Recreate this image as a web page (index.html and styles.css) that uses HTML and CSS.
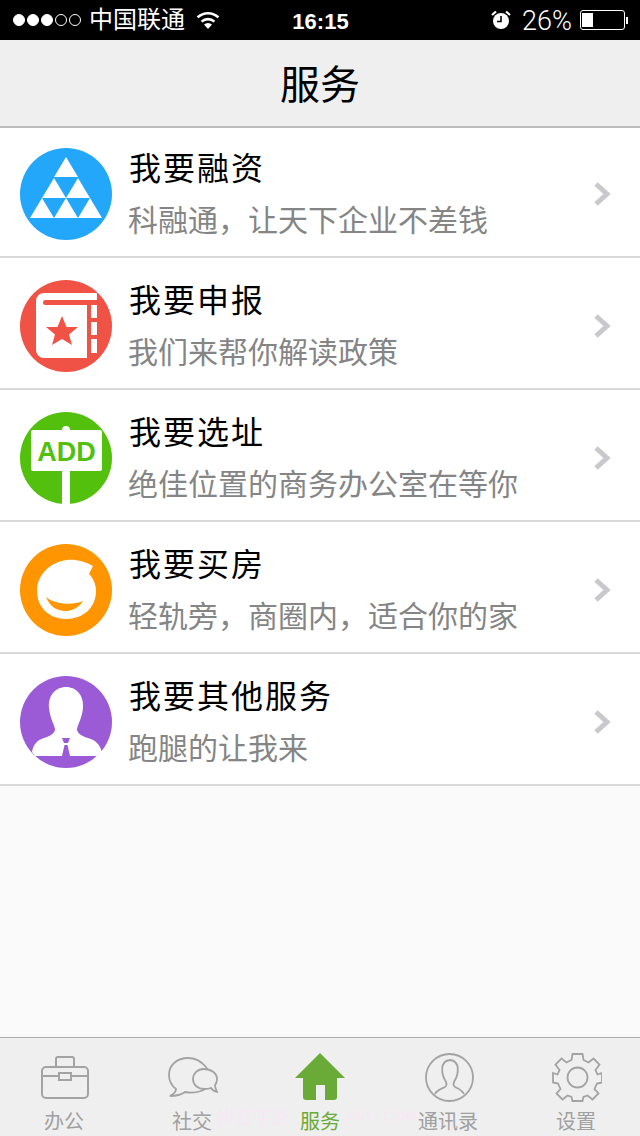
FILE: index.html
```html
<!DOCTYPE html>
<html lang="zh-CN">
<head>
    <meta charset="UTF-8">
    <meta name="viewport" content="width=device-width, initial-scale=1.0">
    <title>服务</title>
    <link rel="stylesheet" href="styles.css">
</head>
<body>
    <div class="app">
        <div class="status-bar">
            <div class="status-left">
                <span class="signal">
                    <i class="dot on"></i><i class="dot on"></i><i class="dot on"></i><i class="dot"></i><i class="dot"></i>
                </span>
                <span class="carrier">中国联通</span>
                <svg class="wifi" viewBox="0 0 26 20">
                    <path d="M13 19 L9 14.6 A6 6 0 0 1 17 14.6 Z" fill="#fff"></path>
                    <path d="M6.6 11.6 A9.5 9.5 0 0 1 19.4 11.6" fill="none" stroke="#fff" stroke-width="2.6"></path>
                    <path d="M2.6 7.4 A15 15 0 0 1 23.4 7.4" fill="none" stroke="#fff" stroke-width="2.6"></path>
                </svg>
            </div>
            <div class="status-time">16:15</div>
            <div class="status-right">
                <svg class="alarm" viewBox="0 0 20 20">
                    <circle cx="10" cy="11" r="8" fill="#fff"></circle>
                    <path d="M10 6 V11.5 H6" fill="none" stroke="#000" stroke-width="1.6"></path>
                    <path d="M1 5 L5 1.5 M19 5 L15 1.5" stroke="#fff" stroke-width="2.2"></path>
                </svg>
                <span class="percent">26%</span>
                <span class="battery"><span class="battery-level"></span></span>
                <span class="battery-tip"></span>
            </div>
        </div>

        <div class="nav-bar">服务</div>

        <div class="list">
            <div class="row">
                <svg class="row-icon" viewBox="0 0 92 92">
                    <circle cx="46" cy="46" r="46" fill="#22a7fb"></circle>
                    <path d="M46 9 L58 29 H34 Z M34 30 L46 50 H22 Z M58 30 L70 50 H46 Z M22 50 L34 70 H10 Z M46 50 L58 70 H34 Z M70 50 L82 70 H58 Z" fill="#fff"></path>
                </svg>
                <div class="row-text">
                    <div class="row-title">我要融资</div>
                    <div class="row-sub">科融通，让天下企业不差钱</div>
                </div>
                <svg class="chevron" viewBox="0 0 18 26"><path d="M3 3 L14 13 L3 23" fill="none" stroke="#c8c8cd" stroke-width="5"></path></svg>
            </div>
            <div class="row">
                <svg class="row-icon" viewBox="0 0 92 92">
                    <circle cx="46" cy="46" r="46" fill="#f05246"></circle>
                    <path d="M24 13 H77 V20 H25.5 A2.5 2.5 0 0 0 25.5 25 H67 V78 H24 A8 8 0 0 1 16 70 V21 A8 8 0 0 1 24 13 Z M71 25 H77 V38 H71 Z M71 42 H77 V55 H71 Z M71 59 H77 V73 H71 Z" fill="#fff"></path>
                    <path d="M42 36 L46.5 47 H58 L49 54.5 L52 65 L42 59 L32 65 L35 54.5 L26 47 H37.5 Z" fill="#f05246"></path>
                </svg>
                <div class="row-text">
                    <div class="row-title">我要申报</div>
                    <div class="row-sub">我们来帮你解读政策</div>
                </div>
                <svg class="chevron" viewBox="0 0 18 26"><path d="M3 3 L14 13 L3 23" fill="none" stroke="#c8c8cd" stroke-width="5"></path></svg>
            </div>
            <div class="row">
                <svg class="row-icon" viewBox="0 0 92 92">
                    <circle cx="46" cy="46" r="46" fill="#52c00c"></circle>
                    <path d="M13 18 H42 A4 4 0 0 1 50 18 H80 A2 2 0 0 1 82 20 V57 A2 2 0 0 1 80 59 H50 V92 H42 V59 H13 A2 2 0 0 1 11 57 V20 A2 2 0 0 1 13 18 Z" fill="#fff"></path>
                    <text class="add-text" x="46.5" y="49" text-anchor="middle">ADD</text>
                </svg>
                <div class="row-text">
                    <div class="row-title">我要选址</div>
                    <div class="row-sub">绝佳位置的商务办公室在等你</div>
                </div>
                <svg class="chevron" viewBox="0 0 18 26"><path d="M3 3 L14 13 L3 23" fill="none" stroke="#c8c8cd" stroke-width="5"></path></svg>
            </div>
            <div class="row">
                <svg class="row-icon" viewBox="0 0 92 92">
                    <circle cx="46" cy="46" r="46" fill="#ff9500"></circle>
                    <path d="M47 16 C56 15 66 18 73 22 L69 30 C73 34 76 40 76 47 C76 64 63 75 46 75 C30 75 17 64 17 47 C17 31 30 18 47 16 Z" fill="#fff"></path>
                    <path d="M26 53 C34 60 52 62 63 57 C58 65 50 67 46 67 C36 67 30 62 26 53 Z" fill="#ff9500"></path>
                </svg>
                <div class="row-text">
                    <div class="row-title">我要买房</div>
                    <div class="row-sub">轻轨旁，商圈内，适合你的家</div>
                </div>
                <svg class="chevron" viewBox="0 0 18 26"><path d="M3 3 L14 13 L3 23" fill="none" stroke="#c8c8cd" stroke-width="5"></path></svg>
            </div>
            <div class="row">
                <svg class="row-icon" viewBox="0 0 92 92">
                    <circle cx="46" cy="46" r="46" fill="#9b5bd6"></circle>
                    <path d="M46 11 C57 11 64 20 63 32 C62 42 58 48 57 53 C57 57 61 60 68 62 C76 64 80 69 82 76 L77 80 H15 L12 76 C13 69 17 64 24 62 C31 60 35 57 35 53 C34 48 30 42 29 32 C28 20 35 11 46 11 Z" fill="#fff"></path>
                    <path d="M42 62 H50 L48 67 H44 Z M44.5 69 H47.5 L50 80 H42 Z" fill="#9b5bd6"></path>
                </svg>
                <div class="row-text">
                    <div class="row-title">我要其他服务</div>
                    <div class="row-sub">跑腿的让我来</div>
                </div>
                <svg class="chevron" viewBox="0 0 18 26"><path d="M3 3 L14 13 L3 23" fill="none" stroke="#c8c8cd" stroke-width="5"></path></svg>
            </div>
        </div>

        <div class="tab-bar">
            <div class="tab">
                <svg class="tab-icon" viewBox="0 0 52 50">
                    <g fill="none" stroke="#a3a3a3" stroke-width="2">
                        <rect x="4" y="14" width="46" height="31" rx="4"></rect>
                        <path d="M18 14 V6 A2 2 0 0 1 20 4 H34 A2 2 0 0 1 36 6 V14"></path>
                        <path d="M4 23 H21 M33 23 H50"></path>
                        <rect x="21" y="20" width="12" height="7"></rect>
                    </g>
                </svg>
                <span class="tab-label">办公</span>
            </div>
            <div class="tab">
                <svg class="tab-icon" viewBox="0 0 52 50">
                    <g fill="#efefef" stroke="#a3a3a3" stroke-width="1.8">
                        <path d="M22 5 C11 5 3 12 3 22 C3 29 6 33 10 36 C10 39 8 41 4 43 C10 43 15 42 19 39 C30 41 40 38 44 30 C48 20 36 5 22 5 Z"></path>
                        <path d="M38 16 C31 16 27 21 27 26 C27 32 32 36 38 36 C41 36 43 36 45 35 C46 37 48 38 51 39 C50 37 49 35 49 32 C51 30 51 28 51 26 C51 20 45 16 38 16 Z"></path>
                    </g>
                </svg>
                <span class="tab-label">社交</span>
            </div>
            <div class="tab tab-active">
                <svg class="tab-icon" viewBox="0 0 52 50">
                    <path d="M26 0 L51 25 H43 V44 A3 3 0 0 1 40 47 H31 V32 H22 V47 H12 A3 3 0 0 1 9 44 V25 H1 Z" fill="#6aaa37"></path>
                </svg>
                <span class="tab-label">服务</span>
            </div>
            <div class="tab">
                <svg class="tab-icon" viewBox="0 0 52 50">
                    <g fill="none" stroke="#a3a3a3" stroke-width="1.8">
                        <circle cx="27.5" cy="24.5" r="23.5"></circle>
                        <path d="M13 41 C15 37 19 36 23 34 C25 33 25 30 23 27 C20 22 17 8 28 7 C39 8 36 22 33 27 C31 30 31 33 33 34 C37 36 40 37 42 41"></path>
                    </g>
                </svg>
                <span class="tab-label">通讯录</span>
            </div>
            <div class="tab">
                <svg class="tab-icon" viewBox="0 0 52 50">
                    <g fill="none" stroke="#a3a3a3" stroke-width="1.8" transform="translate(1.5 0.5)">
                        <circle cx="26" cy="24" r="10"></circle>
                        <path d="M21 0.5 H31 L32 6.5 L37 9 L42 5 L48 11 L44 16.5 L46 21 L50.5 19.5 V29 L45.5 30 L43 35.5 L47 40 L41 46 L36 42 L32 43.5 L31 47.5 H21 L20 43.5 L16 42 L11 46 L5 40 L9 35.5 L6.5 30 L1.5 29 V19.5 L6 21 L8 16.5 L4 11 L10 5 L15 9 L20 6.5 Z"></path>
                    </g>
                </svg>
                <span class="tab-label">设置</span>
            </div>
        </div>
        <div class="watermark watermark-left">拼音字游</div>
        <div class="watermark watermark-right">JINYI.COM</div>
    </div>
</body>
</html>
```

FILE: styles.css
```css
* {
    box-sizing: border-box;
}
html, body {
    margin: 0;
    padding: 0;
}
body {
    font-family: "Liberation Sans", "Noto Sans CJK SC", sans-serif;
    background-color: #fff;
}
.app {
    position: relative;
    width: 640px;
    height: 1136px;
    display: flex;
    flex-direction: column;
    overflow: hidden;
    background-color: #fafafa;
}

/* status bar */
.status-bar {
    height: 40px;
    background-color: #000;
    color: #fff;
    display: flex;
    align-items: center;
    justify-content: space-between;
    padding: 0 12px 0 13px;
    flex-shrink: 0;
}
.status-left, .status-right {
    display: flex;
    align-items: center;
    width: 240px;
}
.status-right {
    justify-content: flex-end;
}
.signal {
    display: flex;
    gap: 2px;
}
.dot {
    width: 12px;
    height: 12px;
    border-radius: 50%;
    border: 1px solid #fff;
}
.dot.on {
    background-color: #fff;
}
.carrier {
    font-size: 24px;
    line-height: 38px;
    margin-left: 8px;
}
.wifi {
    width: 26px;
    height: 20px;
    margin-left: 10px;
}
.status-time {
    font-size: 22px;
    font-weight: bold;
    padding-top: 3px;
}
.alarm {
    width: 20px;
    height: 20px;
    margin-right: 11px;
}
.percent {
    font-family: Roboto, "Liberation Sans", sans-serif;
    font-size: 27px;
    font-weight: 300;
    padding-top: 1px;
    margin-right: 8px;
}
.battery {
    width: 45px;
    height: 20px;
    border: 1px solid #fff;
    border-radius: 3px;
    padding: 2px 1px;
    display: flex;
}
.battery-level {
    width: 11px;
    background-color: #fff;
}
.battery-tip {
    width: 2px;
    height: 7px;
    margin-left: 1px;
    background-color: #fff;
}

/* nav */
.nav-bar {
    height: 88px;
    background-color: #efefef;
    border-bottom: 2px solid #bbb;
    display: flex;
    align-items: center;
    justify-content: center;
    font-size: 40px;
    color: #000;
    padding-bottom: 2px;
    flex-shrink: 0;
}

/* list */
.list {
    flex: 1;
}
.row {
    height: 132px;
    padding: 6px 28px 0 20px;
    background-color: #fff;
    border-bottom: 2px solid #d9d9d9;
    display: flex;
    align-items: center;
}
.row:first-child {
    height: 130px;
    padding-top: 4px;
}
.row-icon {
    width: 92px;
    height: 92px;
    flex-shrink: 0;
}
.add-text {
    font-family: "Liberation Sans", sans-serif;
    font-size: 27px;
    font-weight: bold;
    fill: #52c00c;
}
.row-text {
    flex: 1;
    margin-left: 17px;
    margin-top: 2px;
}
.row-title {
    font-size: 32px;
    letter-spacing: 2px;
    line-height: 40px;
    color: #000;
}
.row-sub {
    font-size: 30px;
    line-height: 40px;
    margin-top: 12px;
    margin-left: -1px;
    color: #858585;
}
.chevron {
    width: 18px;
    height: 26px;
    margin-right: 1px;
    flex-shrink: 0;
}

/* tabs */
.tab-bar {
    height: 99px;
    background-color: #efefef;
    border-top: 1px solid #aaa;
    display: flex;
    flex-shrink: 0;
}
.tab {
    width: 128px;
    display: flex;
    flex-direction: column;
    align-items: center;
    padding-top: 15px;
}
.tab-icon {
    width: 52px;
    height: 50px;
}
.tab-label {
    font-size: 20px;
    line-height: 24px;
    margin-top: 7px;
    color: #a0a0a0;
}
.tab-active .tab-label {
    color: #6aaa37;
}
.watermark {
    position: absolute;
    color: #f6e8f5;
}
.watermark-left {
    left: 217px;
    top: 1103px;
    font-size: 18px;
}
.watermark-right {
    left: 342px;
    top: 1107px;
    font-size: 15px;
}
```
